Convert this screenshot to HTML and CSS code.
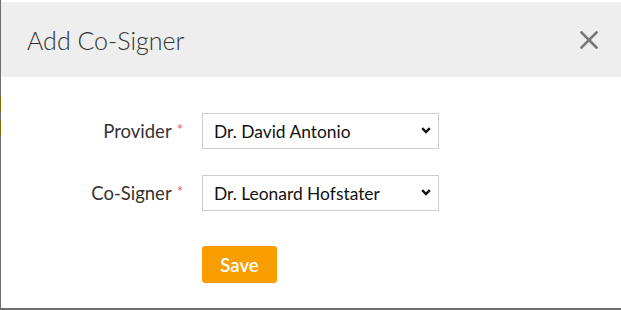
FILE: index.html
```html
<!DOCTYPE html>
<html>
<head>
<meta charset="utf-8">
<link rel="stylesheet" href="styles.css">
</head>
<body>
<div class="edge">
  <div class="edge-gap1"></div>
  <div class="edge-mark"></div>
  <div class="edge-gap2"></div>
  <div class="edge-mark"></div>
</div>
<div class="modal">
  <div class="header">
    <h1 class="title">Add Co-Signer</h1>
    <button class="close" aria-label="Close">
      <svg width="18" height="18" viewBox="0 0 18 18"><path d="M1.5 1.5 L16.5 16.5 M16.5 1.5 L1.5 16.5" stroke="#777" stroke-width="2.6" stroke-linecap="square"/></svg>
    </button>
  </div>
  <form class="form">
    <label class="label" for="prov">Provider<span class="req">*</span></label>
    <span class="select-wrap">
      <select id="prov" class="select"><option>Dr. David Antonio</option></select>
      <svg class="chev" width="10" height="7" viewBox="0 0 10 7"><path d="M1.2 1.2 L5 5 L8.8 1.2" fill="none" stroke="#111" stroke-width="2.4"/></svg>
    </span>
    <label class="label" for="cos">Co-Signer<span class="req">*</span></label>
    <span class="select-wrap">
      <select id="cos" class="select"><option>Dr. Leonard Hofstater</option></select>
      <svg class="chev" width="10" height="7" viewBox="0 0 10 7"><path d="M1.2 1.2 L5 5 L8.8 1.2" fill="none" stroke="#111" stroke-width="2.4"/></svg>
    </span>
    <div></div>
    <div class="actions"><button type="button" class="save">Save</button></div>
  </form>
</div>
</body>
</html>
```
FILE: styles.css
```css
html, body { margin: 0; padding: 0; }
body {
  display: flex;
  width: 621px;
  height: 310px;
  background: #6e6e6e;
  overflow: hidden;
  font-family: Lato, "Liberation Sans", sans-serif;
}
.edge {
  width: 1px;
  display: flex;
  flex-direction: column;
}
.edge-gap1 { height: 97px; }
.edge-gap2 { height: 10px; }
.edge-mark { height: 14px; background: #8a6200; }
.modal {
  flex: 1;
  height: 308px;
  background: #fff;
  display: flex;
  flex-direction: column;
}
.header {
  margin-top: 2px;
  height: 75px;
  background: #eeeeee;
  display: flex;
  align-items: center;
  justify-content: space-between;
  padding: 0 23px 0 26px;
}
.title {
  margin: 0;
  font-weight: 300;
  font-size: 25px;
  color: #333;
}
.close {
  border: 0;
  background: transparent;
  padding: 0;
  width: 18px;
  height: 18px;
  display: flex;
}
.form {
  display: grid;
  grid-template-columns: 182px 237px;
  column-gap: 19px;
  row-gap: 26px;
  align-items: center;
  margin-top: 36px;
}
.label {
  text-align: right;
  font-size: 18.5px;
  color: #333;
}
.req {
  color: #e8633a;
  font-size: 15px;
  margin-left: 5px;
  vertical-align: 3px;
}
.select-wrap {
  position: relative;
  display: block;
  width: 237px;
  height: 36px;
}
.select {
  appearance: none;
  -webkit-appearance: none;
  display: block;
  height: 36px;
  width: 237px;
  border: 1px solid #cccccc;
  border-radius: 0;
  background: #fff;
  font-family: Lato, "Liberation Sans", sans-serif;
  font-size: 17.4px;
  color: #111;
  padding: 0 24px 0 11px;
}
.chev {
  position: absolute;
  right: 8px;
  top: 14px;
  pointer-events: none;
}
.actions { margin-top: 9px; }
.save {
  width: 75px;
  height: 37px;
  border: 0;
  border-radius: 3px;
  background: #fa9e00;
  color: #fff;
  font-family: Lato, "Liberation Sans", sans-serif;
  font-size: 18.5px;
  font-weight: 600;
  padding: 0;
}
```
